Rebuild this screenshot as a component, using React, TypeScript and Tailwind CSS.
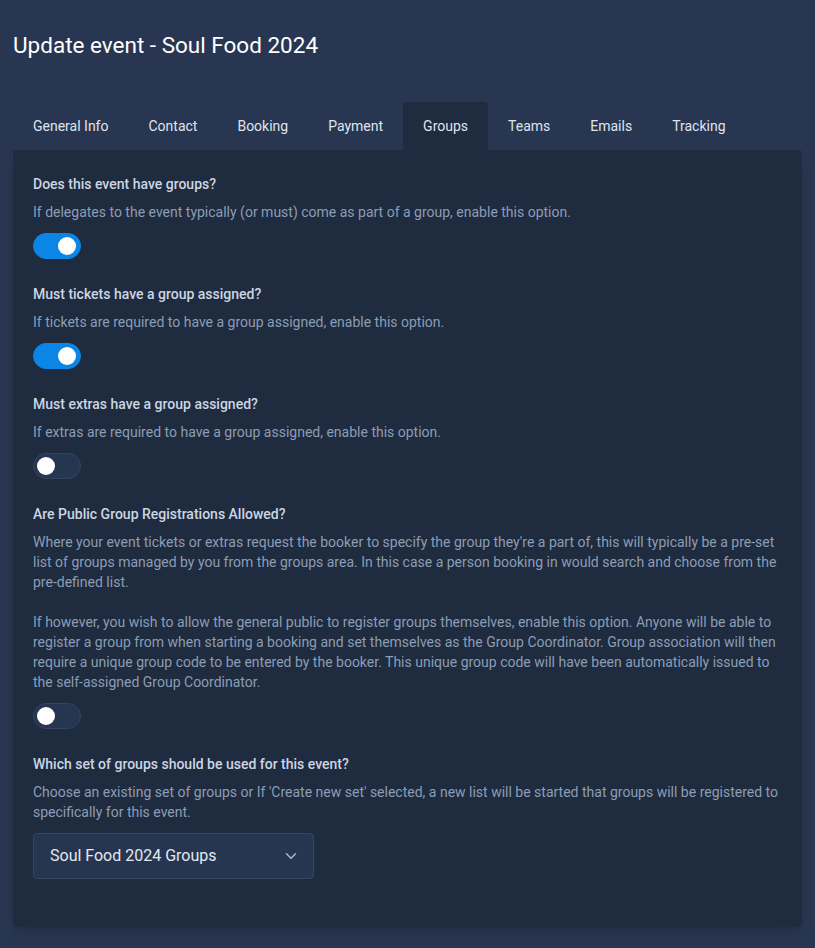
import { useState } from "react";

const tabs = ["General Info", "Contact", "Booking", "Payment", "Groups", "Teams", "Emails", "Tracking"];

function Toggle({ on, onClick }: { on: boolean; onClick: () => void }) {
  return (
    <button
      onClick={onClick}
      className={`relative w-[48px] h-[26px] rounded-full border ${
        on ? "bg-[#0b85e6] border-[#0b85e6]" : "bg-[#273650] border-[#34445f]"
      }`}
    >
      <span
        className={`absolute top-[3px] w-[18px] h-[18px] rounded-full bg-white ${on ? "left-[24px]" : "left-[3px]"}`}
      />
    </button>
  );
}

function Section({ title, children, on, onToggle }: any) {
  return (
    <div className="mb-[25px]">
      <div className="text-[14px] font-medium text-[#ccd6e3] leading-5">{title}</div>
      <div className="mt-2 text-[14px] text-[#8c9db6] leading-5">{children}</div>
      <div className="mt-[11px] h-[26px]">
        <Toggle on={on} onClick={onToggle} />
      </div>
    </div>
  );
}

export default function App() {
  const [flags, setFlags] = useState([true, true, false, false]);
  const flip = (i: number) => setFlags(flags.map((f, j) => (j === i ? !f : f)));

  return (
    <div className="min-h-[948px] bg-[#283651] font-['Roboto',sans-serif] px-[13px] pt-[30px] pb-[23px]">
      <h1 className="text-[22.5px] text-white leading-[30px]">Update event - Soul Food 2024</h1>

      <div className="flex mt-[42px]">
        {tabs.map((t) => (
          <div
            key={t}
            className={`px-5 h-[48px] flex items-center text-[14px] text-[#dfe5ee] rounded-t ${
              t === "Groups" ? "bg-[#1f2b3e]" : ""
            }`}
          >
            {t}
          </div>
        ))}
      </div>

      <div className="bg-[#1f2b3e] rounded-b rounded-tr shadow-lg px-5 pt-6 pb-12">
        <Section title="Does this event have groups?" on={flags[0]} onToggle={() => flip(0)}>
          If delegates to the event typically (or must) come as part of a group, enable this option.
        </Section>
        <Section title="Must tickets have a group assigned?" on={flags[1]} onToggle={() => flip(1)}>
          If tickets are required to have a group assigned, enable this option.
        </Section>
        <Section title="Must extras have a group assigned?" on={flags[2]} onToggle={() => flip(2)}>
          If extras are required to have a group assigned, enable this option.
        </Section>
        <Section title="Are Public Group Registrations Allowed?" on={flags[3]} onToggle={() => flip(3)}>
          <p>
            Where your event tickets or extras request the booker to specify the group they're a part of, this will
            typically be a pre-set list of groups managed by you from the groups area. In this case a person booking in
            would search and choose from the pre-defined list.
          </p>
          <p className="mt-5">
            If however, you wish to allow the general public to register groups themselves, enable this option. Anyone
            will be able to register a group from when starting a booking and set themselves as the Group Coordinator.
            Group association will then require a unique group code to be entered by the booker. This unique group code
            will have been automatically issued to the self-assigned Group Coordinator.
          </p>
        </Section>

        <div>
          <div className="text-[14px] font-medium text-[#ccd6e3] leading-5">Which set of groups should be used for this event?</div>
          <div className="mt-2 text-[14px] text-[#8c9db6] leading-5">
            Choose an existing set of groups or If 'Create new set' selected, a new list will be started that groups will
            be registered to specifically for this event.
          </div>
          <div className="mt-[11px] w-[281px] h-[46px] flex items-center justify-between pl-4 pr-[13px] bg-[#273650] border border-[#364660] rounded text-[16px] text-[#e3e8f0]">
            <span>Soul Food 2024 Groups</span>
            <svg width="18" height="18" viewBox="0 0 24 24" fill="none" stroke="#aab6c8" strokeWidth="2" strokeLinecap="round" strokeLinejoin="round">
              <path d="M6 9l6 6 6-6" />
            </svg>
          </div>
        </div>
      </div>
    </div>
  );
}
